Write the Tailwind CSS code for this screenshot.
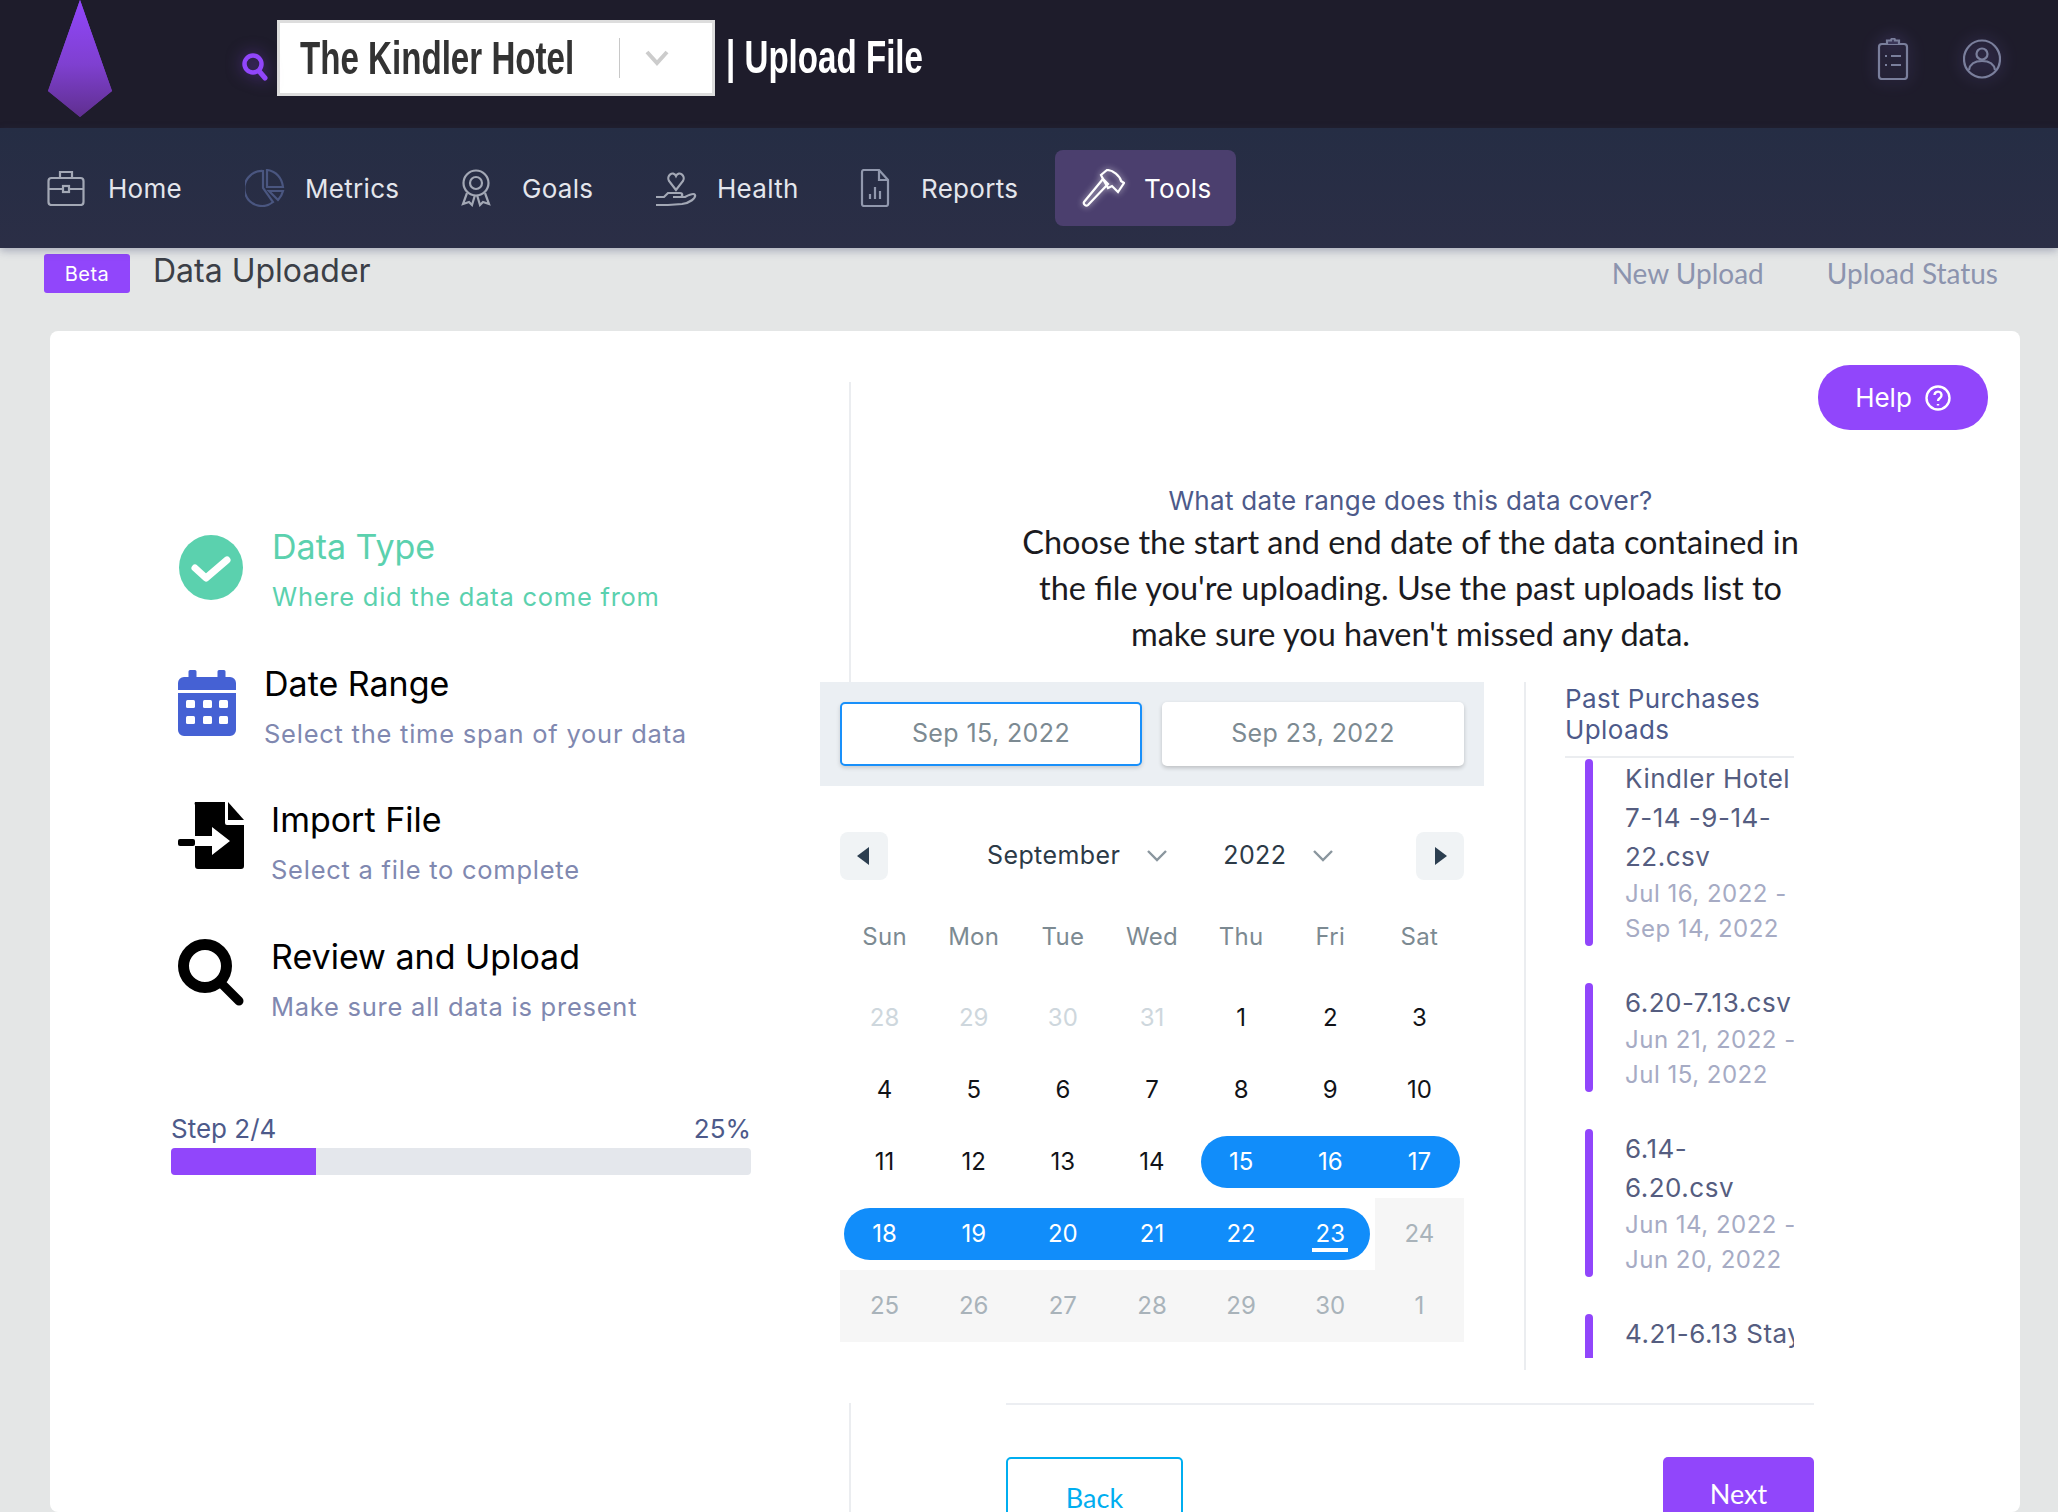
<!DOCTYPE html>
<html><head><meta charset="utf-8"><script src="https://cdn.jsdelivr.net/npm/@tailwindcss/browser@4"></script></head>
<body class="m-0 w-[2058px] h-[1512px] overflow-hidden bg-[#e4e6e6] font-['Inter',sans-serif]">
<header class="h-[128px] bg-[#1e1c2b] flex items-start relative">
  <svg class="ml-[48px] w-[64px] h-[118px] shrink-0" viewBox="0 0 64 118"><defs><linearGradient id="k" x1="0" y1="0" x2="0" y2="1"><stop offset="0" stop-color="#9146fb"/><stop offset="0.55" stop-color="#7f40d0"/><stop offset="1" stop-color="#5f2f8f"/></linearGradient></defs><polygon points="32,0 64,91 32,117 0,91" fill="url(#k)" style="d:none"/><polygon points="32,0 64,91 32,117 0,91" fill="url(#k)"/></svg>
  <svg class="ml-[127px] mt-[50px] w-[32px] h-[32px] shrink-0" viewBox="0 0 32 32" fill="none" style="filter:drop-shadow(0 0 8px rgba(145,70,251,.5))"><circle cx="14" cy="14" r="8.5" stroke="#9146fb" stroke-width="4.5"/><path d="M20 21l6 7" stroke="#9146fb" stroke-width="5" stroke-linecap="round"/></svg>
  <div class="ml-[6px] mt-[20px] w-[438px] h-[76px] bg-white border-[3px] border-[#dddddd] flex items-center shrink-0">
    <div class="w-[339px] pl-[20px] h-full flex items-center overflow-hidden"><span class="inline-block origin-left scale-x-[0.72] whitespace-nowrap font-['Liberation_Sans'] font-bold text-[46px] text-[#333333]">The Kindler Hotel</span></div>
    <div class="w-px h-[40px] bg-[#c8c8c8]"></div>
    <svg class="ml-[25px] w-[24px] h-[16px]" viewBox="0 0 24 16" fill="none"><path d="M2 2l10 11L22 2" stroke="#cccccc" stroke-width="4"/></svg>
  </div>
  <div class="ml-[11px] mt-[19px] h-[76px] w-[300px] flex items-center overflow-hidden"><span class="inline-block origin-left scale-x-[0.72] whitespace-nowrap font-['Liberation_Sans'] font-bold text-[46px] text-white">| Upload File</span></div>
  <div class="ml-auto mr-[57px] mt-[38px] flex items-center gap-[52px]">
    <svg class="w-[36px] h-[42px]" viewBox="0 0 36 42" fill="none" stroke="#7a7f9c" stroke-width="2.2" style="filter:drop-shadow(0 0 8px rgba(145,120,230,.45))"><rect x="4" y="6" width="28" height="35" rx="3"/><path d="M12 6V2.5h4a2 2 0 014 0h4V6" fill="#3a3658"/><path d="M10 18h2M16 18h10M10 27h2M16 27h10"/></svg>
    <svg class="w-[38px] h-[40px]" viewBox="0 0 38 40" fill="none" stroke="#7a7f9c" stroke-width="2.2" style="filter:drop-shadow(0 0 8px rgba(145,120,230,.45))"><ellipse cx="19" cy="20" rx="18" ry="18.5"/><circle cx="19" cy="15" r="5.5"/><path d="M6 31c1-6 6-9 13-9s12 3 13 9"/></svg>
  </div>
</header>
<nav class="h-[120px] bg-gradient-to-b from-[#252d44] to-[#2b2e46] flex items-center text-[26px] text-[#e4e6ec] tracking-[0.3px] shadow-[0_3px_8px_rgba(60,70,110,0.35)] relative">
  <div class="ml-[47px] flex items-center w-[198px]">
    <svg class="w-[38px] h-[36px] shrink-0" viewBox="0 0 38 36" fill="none" stroke="#a3a8b5" stroke-width="2.2"><rect x="1.5" y="8" width="35" height="27" rx="3"/><path d="M13 8V2h12v6M1.5 19h35"/><rect x="16" y="16" width="6" height="6" fill="#252d44"/></svg>
    <span class="ml-[23px]">Home</span>
  </div>
  <div class="flex items-center w-[215px]">
    <svg class="w-[40px] h-[38px] shrink-0" viewBox="0 0 40 38" fill="none" stroke="#4a5680" stroke-width="2.2"><path d="M18 2A17.5 17.5 0 1028 33L18 19z"/><path d="M22 1c9 1 15 8 16 17H22zM24 22h14c-1 4-3 7-5 9z"/></svg>
    <span class="ml-[20px]">Metrics</span>
  </div>
  <div class="flex items-center w-[195px]">
    <svg class="w-[32px] h-[38px] shrink-0" viewBox="0 0 32 38" fill="none" stroke="#a3a8b5" stroke-width="2.2"><circle cx="16" cy="14" r="12.5"/><circle cx="16" cy="14" r="6"/><path d="M7 24l-4 11 6-2 3 3 3-10M25 24l4 11-6-2-3 3-3-10"/></svg>
    <span class="ml-[30px]">Goals</span>
  </div>
  <div class="flex items-center w-[205px]">
    <svg class="w-[42px] h-[38px] shrink-0" viewBox="0 0 42 38" fill="none" stroke="#a3a8b5" stroke-width="2.2"><path d="M21 21l-7-9c-3-5 4-11 7-5 3-6 10 0 7 5z"/><path d="M1 36h12l14-1c8-1 14-6 13-9-1-2-6 0-10 2H19m-18 0h8l4-4h12c3 0 3 4 0 4h-7"/></svg>
    <span class="ml-[20px]">Health</span>
  </div>
  <div class="flex items-center w-[195px]">
    <svg class="w-[30px] h-[38px] shrink-0" viewBox="0 0 30 38" fill="none" stroke="#9198ad" stroke-width="2.2"><path d="M2 3a2 2 0 012-2h15l9 10v24a2 2 0 01-2 2H4a2 2 0 01-2-2z"/><path d="M19 1v10h9M10 30v-5M15 30V18M20 30v-8"/></svg>
    <span class="ml-[31px]">Reports</span>
  </div>
  <div class="w-[181px] h-[76px] bg-[#4b3f6e] rounded-[8px] flex items-center text-white">
    <svg class="ml-[27px] w-[43px] h-[38px] shrink-0" viewBox="0 0 43 38" fill="none" stroke="#ffffff" stroke-width="2.2" style="filter:drop-shadow(0 0 3px rgba(255,255,255,.7))"><path d="M2 33L21 10l5 5L6 36c-2 2-5-1-4-3z"/><path d="M21 10l-2-4 6-5c6 0 13 6 14 11l3 2-6 9-6-6-4 2z"/></svg>
    <span class="ml-[19px]">Tools</span>
  </div>
</nav>
<div class="h-[83px] flex items-start">
  <div class="ml-[44px] mt-[6px] w-[86px] h-[39px] bg-[#9146fb] rounded-[3px] flex items-center justify-center text-white text-[20px] tracking-[0.5px]">Beta</div>
  <div class="ml-[23px] mt-[4px] text-[32px] leading-[38px] text-[#3b3f47]">Data Uploader</div>
  <div class="ml-auto mr-[60px] mt-[6px] flex gap-[63px] font-['Lato'] text-[28px] leading-[38px] text-[#8c94ae]"><span>New Upload</span><span>Upload Status</span></div>
</div>
<main class="ml-[50px] w-[1970px] h-[1181px] bg-white rounded-[8px] flex overflow-hidden">
  <section class="w-[770px] shrink-0 pl-[121px] pt-[192px]">
    <div class="flex h-[137px]">
      <svg class="mt-[12px] ml-[8px] w-[64px] h-[65px] shrink-0" viewBox="0 0 64 65"><ellipse cx="32" cy="32.5" rx="32" ry="32.5" fill="#5bd1ae"/><path d="M16 33l11 10 21-18" fill="none" stroke="#fff" stroke-width="7" stroke-linecap="round" stroke-linejoin="round"/></svg>
      <div class="ml-[29px]"><div class="text-[34px] leading-[48px] text-[#5bd1ae]">Data Type</div><div class="mt-[8px] text-[25.5px] leading-[36px] tracking-[0.75px] text-[#5bd1ae]">Where did the data come from</div></div>
    </div>
    <div class="flex h-[136px]">
      <svg class="mt-[10px] ml-[7px] w-[58px] h-[66px] shrink-0" viewBox="0 0 58 66"><path d="M12 0h5a1.5 1.5 0 011.5 1.500V7h21V1.500A1.500 1.500 0 0141 0h5a1.500 1.500 0 011.500 1.500V7H52a6 6 0 016 6v7H0v-7a6 6 0 016-6h4.500V1.500A1.500 1.500 0 0112 0zM0 23h58v37a6 6 0 01-6 6H6a6 6 0 01-6-6z" fill="#4561d4"/><g fill="#fff"><rect x="8" y="30" width="9" height="8" rx="1.500"/><rect x="25" y="30" width="9" height="8" rx="1.500"/><rect x="41" y="30" width="9" height="8" rx="1.500"/><rect x="8" y="46" width="9" height="8" rx="1.500"/><rect x="25" y="46" width="9" height="8" rx="1.500"/><rect x="41" y="46" width="9" height="8" rx="1.500"/></g></svg>
      <div class="ml-[28px]"><div class="text-[34px] leading-[48px] text-[#000000]">Date Range</div><div class="mt-[8px] text-[25.5px] leading-[36px] tracking-[0.75px] text-[#8088b0]">Select the time span of your data</div></div>
    </div>
    <div class="flex h-[137px]">
      <svg class="mt-[6px] ml-[7px] w-[66px] h-[67px] shrink-0" viewBox="0 0 66 67"><path d="M17 0h30v21a2 2 0 002 2h17v41a3 3 0 01-3 3H20a3 3 0 01-3-3V44h17v9l18-14-18-14v9H17V3a3 3 0 010-3z" fill="#000"/><path d="M50 0l16 18H50z" fill="#000"/><rect x="0" y="37" width="17" height="7" rx="2" fill="#000"/></svg>
      <div class="ml-[27px]"><div class="text-[34px] leading-[48px] text-[#000000]">Import File</div><div class="mt-[8px] text-[25.5px] leading-[36px] tracking-[0.75px] text-[#8088b0]">Select a file to complete</div></div>
    </div>
    <div class="flex h-[180px]">
      <svg class="mt-[6px] ml-[7px] w-[66px] h-[67px] shrink-0" viewBox="0 0 66 67" fill="none"><circle cx="27" cy="27" r="21.500" stroke="#000" stroke-width="11"/><path d="M44 45l17 17" stroke="#000" stroke-width="9" stroke-linecap="round"/></svg>
      <div class="ml-[27px]"><div class="text-[34px] leading-[48px] text-[#000000]">Review and Upload</div><div class="mt-[8px] text-[25.5px] leading-[36px] tracking-[0.75px] text-[#8088b0]">Make sure all data is present</div></div>
    </div>
    <div class="w-[580px]">
      <div class="flex justify-between text-[26px] leading-[32px] text-[#4d5a8a]"><span>Step 2/4</span><span>25%</span></div>
      <div class="mt-[3px] h-[27px] bg-[#e4e7ec] rounded-[4px] overflow-hidden"><div class="w-[145px] h-full bg-[#9146fb]"></div></div>
    </div>
  </section>
  <section class="w-[1200px] shrink-0">
    <div class="h-[351px] relative pt-[51px]">
      <div class="ml-[29px] h-[300px] border-l-2 border-[#ebedf0] pt-[101px] text-center">
        <div class="w-[1119px]">
          <div class="text-[26px] leading-[36px] tracking-[0.3px] text-[#4d5a8a]">What date range does this data cover?</div>
          <div class="font-['Lato'] text-[32.500px] leading-[46px] text-[#1b1b1f]">Choose the start and end date of the data contained in<br>the file you're uploading. Use the past uploads list to<br>make sure you haven't missed any data.</div>
        </div>
      </div>
      <div class="absolute right-[32px] top-[34px] w-[170px] h-[65px] rounded-[32px] bg-[#9146fb] flex items-center justify-center gap-[13px] text-white text-[26px]">Help
        <svg class="w-[26px] h-[26px]" viewBox="0 0 26 26" fill="none" stroke="#fff" stroke-width="2.400"><circle cx="13" cy="13" r="11.500"/><path d="M9.500 10a3.500 3.500 0 115.500 3c-1.500 1-2 1.500-2 3"/><path d="M13 19v1.500"/></svg>
      </div>
    </div>
    <div class="flex h-[688px]">
      <div class="w-[664px] shrink-0">
        <div class="h-[104px] bg-[#ebeff3] px-[20px] flex items-center justify-between text-[25px] text-[#7c8a92] tracking-[0.4px]">
          <div class="w-[302px] h-[64px] bg-white border-2 border-[#1990fa] rounded-[5px] shadow-[0_2px_4px_rgba(0,0,0,0.15)] flex items-center justify-center">Sep 15, 2022</div>
          <div class="w-[302px] h-[64px] bg-white rounded-[5px] shadow-[0_2px_4px_rgba(0,0,0,0.2)] flex items-center justify-center">Sep 23, 2022</div>
        </div>
        <div class="px-[20px]">
          <div class="mt-[46px] h-[48px] flex items-center text-[25px] text-[#2c3a47] tracking-[0.4px]">
            <div class="w-[48px] h-[48px] rounded-[8px] bg-[#f0f3f5] flex items-center justify-center"><svg class="w-[14px] h-[18px]" viewBox="0 0 14 18"><path d="M12 0v18L0 9z" fill="#2c3e50"/></svg></div>
            <span class="ml-[99px]">September</span>
            <svg class="ml-[27px] w-[20px] h-[12px]" viewBox="0 0 20 12" fill="none"><path d="M1 1l9 9 9-9" stroke="#8a969e" stroke-width="2.400"/></svg>
            <span class="ml-[56px]">2022</span>
            <svg class="ml-[27px] w-[20px] h-[12px]" viewBox="0 0 20 12" fill="none"><path d="M1 1l9 9 9-9" stroke="#8a969e" stroke-width="2.400"/></svg>
            <div class="ml-auto w-[48px] h-[48px] rounded-[8px] bg-[#f0f3f5] flex items-center justify-center"><svg class="w-[14px] h-[18px]" viewBox="0 0 14 18"><path d="M2 0v18l12-9z" fill="#2c3e50"/></svg></div>
          </div>
          <div class="mt-[34px] grid grid-cols-7 h-[46px] items-center text-center text-[24px] tracking-[0.3px] text-[#7c8a92]"><span>Sun</span><span>Mon</span><span>Tue</span><span>Wed</span><span>Thu</span><span>Fri</span><span>Sat</span></div>
          <div class="mt-[22px] grid grid-cols-7 auto-rows-[72px] items-center text-center text-[24px] text-[#111318]">
            <span class="text-[#ced7dd]">28</span><span class="text-[#ced7dd]">29</span><span class="text-[#ced7dd]">30</span><span class="text-[#ced7dd]">31</span><span>1</span><span>2</span><span>3</span>
            <span>4</span><span>5</span><span>6</span><span>7</span><span>8</span><span>9</span><span>10</span>
            <span>11</span><span>12</span><span>13</span><span>14</span>
            <span class="ml-[4px] pr-[4px] h-[52px] leading-[52px] bg-[#118dfa] text-white rounded-l-[26px]">15</span><span class="h-[52px] leading-[52px] bg-[#118dfa] text-white">16</span><span class="mr-[4px] pl-[4px] h-[52px] leading-[52px] bg-[#118dfa] text-white rounded-r-[26px]">17</span>
            <span class="ml-[4px] pr-[4px] h-[52px] leading-[52px] bg-[#118dfa] text-white rounded-l-[26px]">18</span><span class="h-[52px] leading-[52px] bg-[#118dfa] text-white">19</span><span class="h-[52px] leading-[52px] bg-[#118dfa] text-white">20</span><span class="h-[52px] leading-[52px] bg-[#118dfa] text-white">21</span><span class="h-[52px] leading-[52px] bg-[#118dfa] text-white">22</span>
            <span class="mr-[5px] pl-[5px] h-[52px] bg-[#118dfa] text-white rounded-r-[26px] flex flex-col items-center"><span class="leading-[52px] h-[40px] block">23</span><span class="block w-[36px] h-[4px] bg-white"></span></span>
            <span class="h-full leading-[72px] bg-[#f6f6f6] text-[#a9b3ba]">24</span>
            <span class="h-full leading-[72px] bg-[#f6f6f6] text-[#a9b3ba]">25</span><span class="h-full leading-[72px] bg-[#f6f6f6] text-[#a9b3ba]">26</span><span class="h-full leading-[72px] bg-[#f6f6f6] text-[#a9b3ba]">27</span><span class="h-full leading-[72px] bg-[#f6f6f6] text-[#a9b3ba]">28</span><span class="h-full leading-[72px] bg-[#f6f6f6] text-[#a9b3ba]">29</span><span class="h-full leading-[72px] bg-[#f6f6f6] text-[#a9b3ba]">30</span><span class="h-full leading-[72px] bg-[#f6f6f6] text-[#a9b3ba]">1</span>
          </div>
        </div>
      </div>
      <aside class="ml-[40px] border-l-2 border-[#ebedf0] pl-[39px] h-[688px]">
        <div class="w-[229px] h-[676px] overflow-hidden">
          <div class="h-[76px] border-b-2 border-[#ebedf0] pt-[1px] text-[26px] leading-[31px] tracking-[0.4px] text-[#4d5a8a]">Past Purchases<br>Uploads</div>
          <div class="flex mt-[1px] h-[187px]"><div class="ml-[20px] w-[8px] rounded-[4px] bg-[#9146fb] shrink-0"></div><div class="ml-[32px] w-[170px]"><div class="text-[26px] leading-[39px] tracking-[0.5px] text-[#555d80]">Kindler Hotel<br>7-14 -9-14-<br>22.csv</div><div class="text-[24px] leading-[35px] tracking-[0.5px] text-[#a6abc4]">Jul 16, 2022 -<br>Sep 14, 2022</div></div></div>
          <div class="flex mt-[37px] h-[109px]"><div class="ml-[20px] w-[8px] rounded-[4px] bg-[#9146fb] shrink-0"></div><div class="ml-[32px] whitespace-nowrap"><div class="text-[26px] leading-[39px] tracking-[0.5px] text-[#555d80]">6.20-7.13.csv</div><div class="text-[24px] leading-[35px] tracking-[0.5px] text-[#a6abc4]">Jun 21, 2022 -<br>Jul 15, 2022</div></div></div>
          <div class="flex mt-[37px] h-[148px]"><div class="ml-[20px] w-[8px] rounded-[4px] bg-[#9146fb] shrink-0"></div><div class="ml-[32px] whitespace-nowrap"><div class="text-[26px] leading-[39px] tracking-[0.5px] text-[#555d80]">6.14-<br>6.20.csv</div><div class="text-[24px] leading-[35px] tracking-[0.5px] text-[#a6abc4]">Jun 14, 2022 -<br>Jun 20, 2022</div></div></div>
          <div class="flex mt-[37px] h-[44px]"><div class="ml-[20px] w-[8px] rounded-t-[4px] bg-[#9146fb] shrink-0"></div><div class="ml-[32px] whitespace-nowrap text-[26px] leading-[39px] tracking-[0.5px] text-[#555d80]">4.21-6.13 Stay</div></div>
        </div>
      </aside>
    </div>
    <div class="ml-[29px] h-[142px] border-l-2 border-[#ebedf0] pl-[155px]">
      <div class="w-[808px]">
        <div class="mt-[33px] h-[2px] bg-[#eceef2]"></div>
        <div class="mt-[52px] flex justify-between font-['Lato'] text-[27px]">
          <div class="w-[177px] h-[90px] border-2 border-[#00aef0] rounded-[5px] text-[#00aef0] text-center pt-[19px]">Back</div>
          <div class="w-[151px] h-[90px] bg-[#9146fb] rounded-[5px] text-white text-center pt-[17px]">Next</div>
        </div>
      </div>
    </div>
  </section>
</main>
</body></html>
